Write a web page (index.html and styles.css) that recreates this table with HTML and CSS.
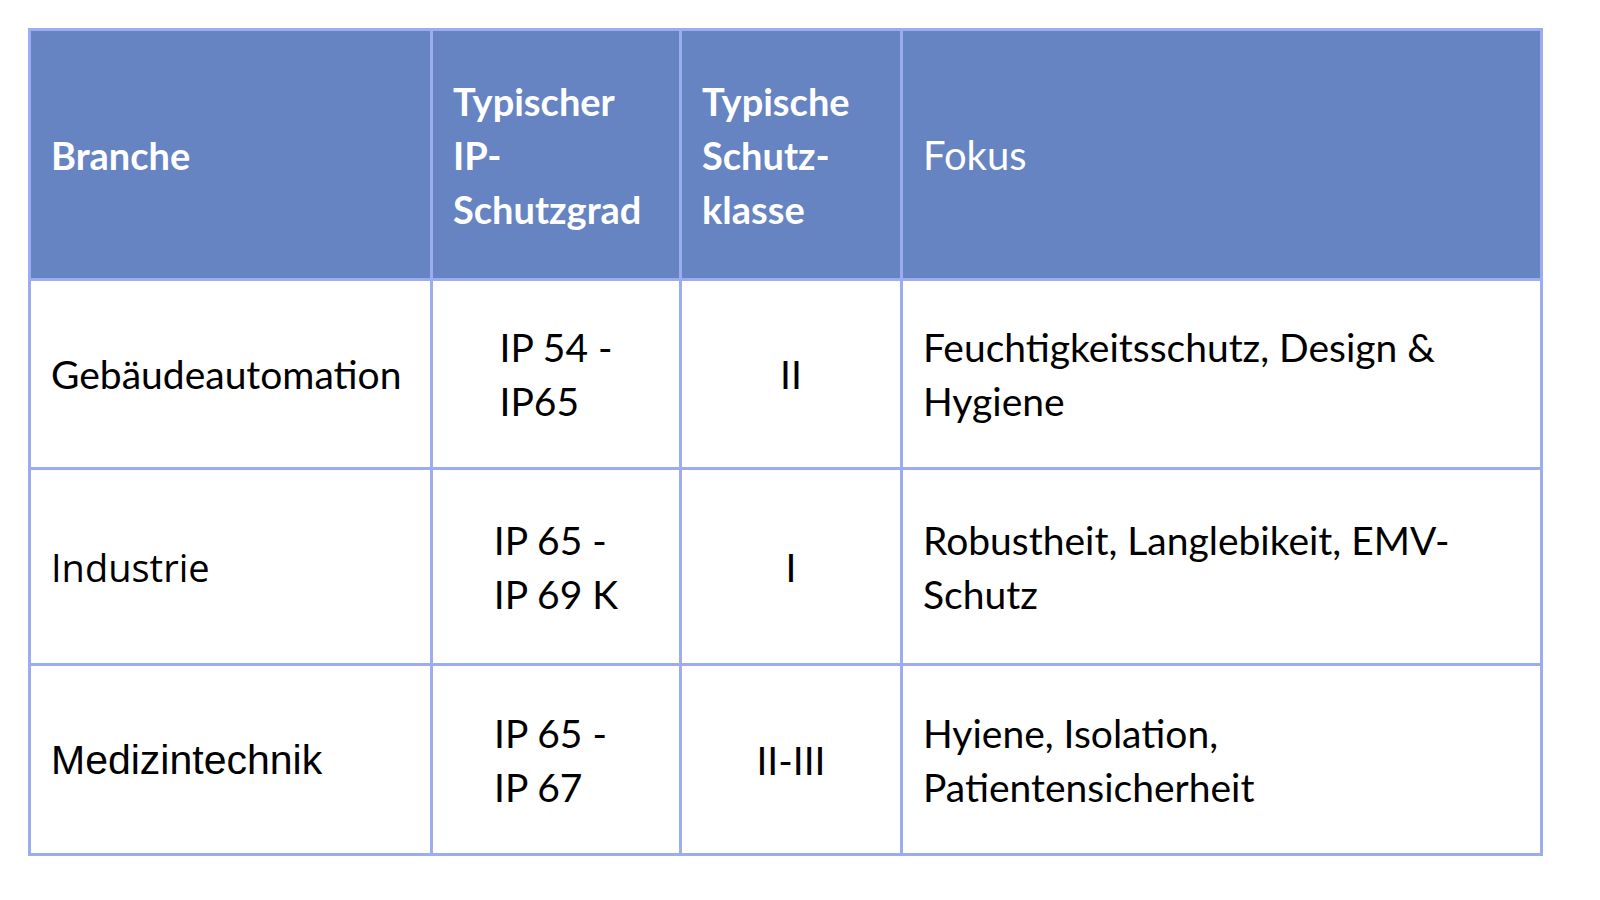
FILE: index.html
```html
<!DOCTYPE html>
<html lang="de">
<head>
<meta charset="utf-8">
<title>Branchen</title>
<link rel="stylesheet" href="styles.css">
</head>
<body>
<table class="grid">
  <colgroup>
    <col class="c1"><col class="c2"><col class="c3"><col class="c4">
  </colgroup>
  <thead>
    <tr class="head">
      <th>Branche</th>
      <th>Typischer<br>IP-<br>Schutzgrad</th>
      <th>Typische<br>Schutz-<br>klasse</th>
      <th class="light">Fokus</th>
    </tr>
  </thead>
  <tbody>
    <tr class="r1">
      <td>Gebäudeautomation</td>
      <td class="ip"><span class="ipbox">IP 54 -<br>IP65</span></td>
      <td class="mid">II</td>
      <td>Feuchtigkeitsschutz, Design &amp;<br>Hygiene</td>
    </tr>
    <tr class="r2">
      <td class="f-open">Industrie</td>
      <td class="ip"><span class="ipbox">IP 65 -<br>IP 69 K</span></td>
      <td class="mid">I</td>
      <td>Robustheit, Langlebikeit, EMV-<br>Schutz</td>
    </tr>
    <tr class="r3">
      <td class="f-arial">Medizintechnik</td>
      <td class="ip"><span class="ipbox wide">IP 65 -<br>IP 67</span></td>
      <td class="mid">II-III</td>
      <td>Hyiene, Isolation,<br>Patientensicherheit</td>
    </tr>
  </tbody>
</table>
</body>
</html>
```

FILE: styles.css
```css
html, body {
  margin: 0;
  padding: 0;
  background: #ffffff;
}

body {
  font-family: "Lato", "Open Sans", sans-serif;
  color: #000000;
}

.grid {
  margin: 28px 0 0 28px;
  width: 1512px;
  table-layout: fixed;
  border-collapse: collapse;
  font-size: 39px;
  line-height: 54px;
}

.c1 { width: 402px; }
.c2 { width: 249px; }
.c3 { width: 221px; }
.c4 { width: 640px; }

.grid th,
.grid td {
  border: 3px solid #9badf0;
  padding: 0 20px;
  vertical-align: middle;
  text-align: left;
}

.head {
  height: 250px;
}

.head th {
  background: #6683c2;
  color: #ffffff;
  font-weight: 700;
  font-size: 38px;
}

.head th.light {
  font-weight: 400;
  font-size: 40px;
}

.r1 { height: 189px; }
.r2 { height: 196px; }
.r3 { height: 190px; }

.grid td.ip,
.grid td.mid {
  text-align: center;
}

.ipbox {
  display: inline-block;
  text-align: left;
}

.ipbox.wide {
  min-width: 124px;
}

.f-open {
  font-family: "Open Sans", sans-serif;
  font-size: 38px;
}

.f-arial {
  font-family: "Liberation Sans", Arial, sans-serif;
  font-size: 41px;
}
```
